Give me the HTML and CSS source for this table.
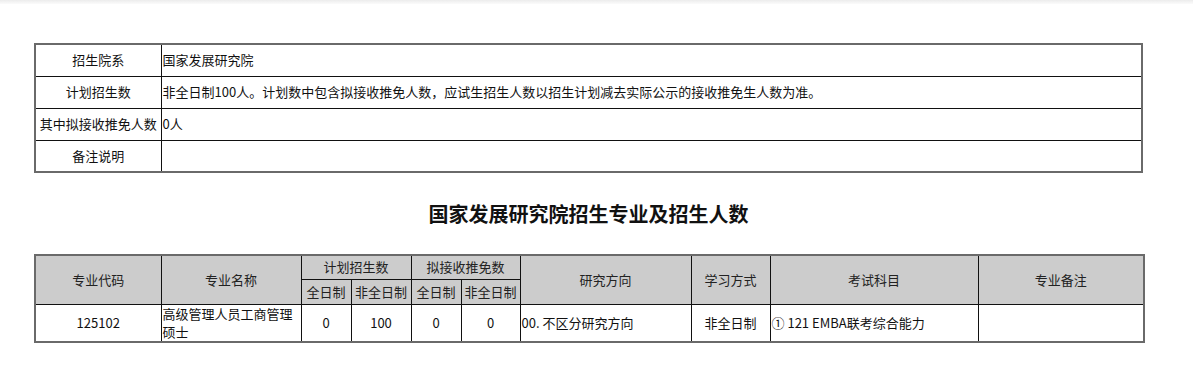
FILE: index.html
```html
<!DOCTYPE html>
<html lang="zh-CN">
<head>
<meta charset="utf-8">
<title>国家发展研究院招生专业及招生人数</title>
<link rel="stylesheet" href="styles.css">
</head>
<body>
<div class="topbar"></div>
<div class="page">
  <table class="info">
    <colgroup><col class="c-label"><col class="c-value"></colgroup>
    <tr><th>招生院系</th><td>国家发展研究院</td></tr>
    <tr><th>计划招生数</th><td>非全日制100人。计划数中包含拟接收推免人数，应试生招生人数以招生计划减去实际公示的接收推免生人数为准。</td></tr>
    <tr><th>其中拟接收推免人数</th><td>0人</td></tr>
    <tr><th>备注说明</th><td></td></tr>
  </table>

  <h2 class="title">国家发展研究院招生专业及招生人数</h2>

  <table class="majors">
    <colgroup>
      <col class="w-code"><col class="w-name"><col class="w-n1"><col class="w-n2">
      <col class="w-n3"><col class="w-n4"><col class="w-dir"><col class="w-mode">
      <col class="w-exam"><col class="w-note">
    </colgroup>
    <thead>
      <tr class="h1">
        <th rowspan="2">专业代码</th>
        <th rowspan="2">专业名称</th>
        <th colspan="2">计划招生数</th>
        <th colspan="2">拟接收推免数</th>
        <th rowspan="2">研究方向</th>
        <th rowspan="2">学习方式</th>
        <th rowspan="2">考试科目</th>
        <th rowspan="2">专业备注</th>
      </tr>
      <tr class="h2">
        <th>全日制</th><th>非全日制</th><th>全日制</th><th>非全日制</th>
      </tr>
    </thead>
    <tbody>
      <tr class="row">
        <td class="center">125102</td>
        <td class="left">高级管理人员工商管理硕士</td>
        <td class="center">0</td>
        <td class="center">100</td>
        <td class="center">0</td>
        <td class="center">0</td>
        <td class="left">00. 不区分研究方向</td>
        <td class="center">非全日制</td>
        <td class="left">① 121 EMBA联考综合能力</td>
        <td></td>
      </tr>
    </tbody>
  </table>
</div>
</body>
</html>
```
FILE: styles.css
```css
html, body {
  margin: 0;
  padding: 0;
  background: #fff;
}
body {
  font-family: "Noto Sans CJK SC", "Noto Sans", sans-serif;
  font-size: 13px;
  color: #111;
}
.topbar {
  height: 4px;
  background: linear-gradient(#ececec, #fbfbfb);
}
.page {
  padding: 39px 0 0 34px;
  width: 1109px;
}
table {
  border-collapse: collapse;
  table-layout: fixed;
  width: 1109px;
  border: 2px solid #6a6a6a;
}
th, td {
  border: 1px solid #111;
  padding: 0 1px;
  font-weight: normal;
  line-height: 18px;
}
.info .c-label { width: 126px; }
.info tr { height: 32px; }
.info th { text-align: center; white-space: nowrap; padding: 0; }
.info td { text-align: left; }

.title {
  margin: 0 0 15px;
  height: 66px;
  padding-top: 27px;
  box-sizing: border-box;
  text-align: center;
  font-size: 20px;
  line-height: 28px;
  font-weight: 700;
  color: #111;
}

.w-code { width: 126px; }
.w-name { width: 140px; }
.w-n1 { width: 50px; }
.w-n2 { width: 60px; }
.w-n3 { width: 50px; }
.w-n4 { width: 59px; }
.w-dir { width: 171px; }
.w-mode { width: 79px; }
.w-exam { width: 208px; }
.w-note { width: 166px; }

.majors thead th {
  background: #cccccc;
  text-align: center;
  color: #222;
}
.majors .h1 { height: 24px; }
.majors .h2 { height: 25px; }
.majors .row { height: 35px; }
.majors td.center { text-align: center; }
.majors td.left { text-align: left; }
```
